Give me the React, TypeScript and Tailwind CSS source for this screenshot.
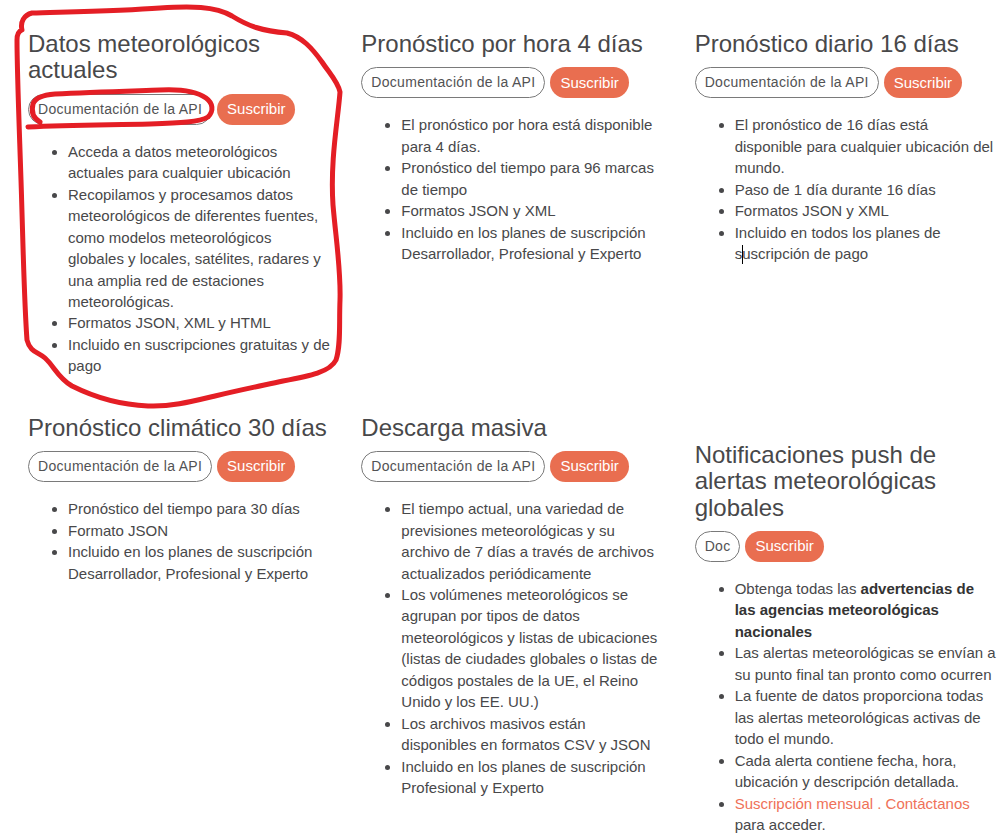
import React from "react";

type Item = React.ReactNode;

function Buttons({ doc = "Documentación de la API" }: { doc?: string }) {
  return (
    <div className="flex gap-[5px] mb-[16px]">
      <span className="h-[31px] flex items-center px-[9px] rounded-full border border-[#7a7a7a] text-[14px] tracking-[0.3px] text-[#525254] whitespace-nowrap">
        {doc}
      </span>
      <span className="h-[31px] flex items-center px-[10px] rounded-full bg-[#e96e50] text-[15px] text-white whitespace-nowrap">
        Suscribir
      </span>
    </div>
  );
}

function Col({
  title,
  items,
  className = "",
  listClass = "",
}: {
  title: React.ReactNode;
  items: Item[];
  className?: string;
  listClass?: string;
}) {
  return (
    <div className={"w-[333.33px] shrink-0 px-[15px] " + className}>
      <h3 className="text-[24px] leading-[26.4px] text-[#48484a] mb-[10px] whitespace-nowrap">{title}</h3>
      <Buttons doc={className.includes("doc-short") ? "Doc" : undefined} />
      <ul className={"list-disc pl-[40px] text-[15px] leading-[21.45px] " + listClass}>
        {items.map((it, i) => (
          <li key={i} className="whitespace-nowrap">
            {it}
          </li>
        ))}
      </ul>
    </div>
  );
}

export default function App() {
  return (
    <div
      className="relative w-full h-[837px] overflow-hidden bg-white text-[#48484a]"
      style={{ fontFamily: '"Liberation Sans", Arial, sans-serif' }}
    >
      <div className="pl-[13px]">
        <div className="flex items-start pt-[31px]">
          <Col
            title={
              <>
                Datos meteorológicos
                <br />
                actuales
              </>
            }
            items={[
              <>
                Acceda a datos meteorológicos
                <br />
                actuales para cualquier ubicación
              </>,
              <>
                Recopilamos y procesamos datos
                <br />
                meteorológicos de diferentes fuentes,
                <br />
                como modelos meteorológicos
                <br />
                globales y locales, satélites, radares y
                <br />
                una amplia red de estaciones
                <br />
                meteorológicas.
              </>,
              <>Formatos JSON, XML y HTML</>,
              <>
                Incluido en suscripciones gratuitas y de
                <br />
                pago
              </>,
            ]}
          />
          <Col
            title="Pronóstico por hora 4 días"
            items={[
              <>
                El pronóstico por hora está disponible
                <br />
                para 4 días.
              </>,
              <>
                Pronóstico del tiempo para 96 marcas
                <br />
                de tiempo
              </>,
              <>Formatos JSON y XML</>,
              <>
                Incluido en los planes de suscripción
                <br />
                Desarrollador, Profesional y Experto
              </>,
            ]}
          />
          <Col
            title="Pronóstico diario 16 días"
            items={[
              <>
                El pronóstico de 16 días está
                <br />
                disponible para cualquier ubicación del
                <br />
                mundo.
              </>,
              <>Paso de 1 día durante 16 días</>,
              <>Formatos JSON y XML</>,
              <>
                Incluido en todos los planes de
                <br />s
                <span className="inline-block w-px h-[19px] bg-black -mx-[0.5px] align-[-5px]" />
                uscripción de pago
              </>,
            ]}
          />
        </div>

        <div className="flex items-start mt-[38px]">
          <Col
            title="Pronóstico climático 30 días"
            items={[
              <>Pronóstico del tiempo para 30 días</>,
              <>Formato JSON</>,
              <>
                Incluido en los planes de suscripción
                <br />
                Desarrollador, Profesional y Experto
              </>,
            ]}
          />
          <Col
            title="Descarga masiva"
            items={[
              <>
                El tiempo actual, una variedad de
                <br />
                previsiones meteorológicas y su
                <br />
                archivo de 7 días a través de archivos
                <br />
                actualizados periódicamente
              </>,
              <>
                Los volúmenes meteorológicos se
                <br />
                agrupan por tipos de datos
                <br />
                meteorológicos y listas de ubicaciones
                <br />
                (listas de ciudades globales o listas de
                <br />
                códigos postales de la UE, el Reino
                <br />
                Unido y los EE. UU.)
              </>,
              <>
                Los archivos masivos están
                <br />
                disponibles en formatos CSV y JSON
              </>,
              <>
                Incluido en los planes de suscripción
                <br />
                Profesional y Experto
              </>,
            ]}
          />
          <Col
            className="mt-[27px] doc-short"
            listClass="mt-[2px]"
            title={
              <>
                Notificaciones push de
                <br />
                alertas meteorológicas
                <br />
                globales
              </>
            }
            items={[
              <>
                Obtenga todas las <b className="font-bold text-[#333]">advertencias de</b>
                <br />
                <b className="font-bold text-[#333]">las agencias meteorológicas</b>
                <br />
                <b className="font-bold text-[#333]">nacionales</b>
              </>,
              <>
                Las alertas meteorológicas se envían a
                <br />
                su punto final tan pronto como ocurren
              </>,
              <>
                La fuente de datos proporciona todas
                <br />
                las alertas meteorológicas activas de
                <br />
                todo el mundo.
              </>,
              <>
                Cada alerta contiene fecha, hora,
                <br />
                ubicación y descripción detallada.
              </>,
              <>
                <span className="text-[#ef7158]">Suscripción mensual . Contáctanos</span>
                <br />
                para acceder.
              </>,
            ]}
          />
        </div>
      </div>

      <svg
        className="absolute top-0 left-0 pointer-events-none"
        width="997"
        height="837"
        viewBox="0 0 997 837"
      >
        <path
          d="M22 30 C 20 22, 24 15, 32 13 C 60 12, 120 11, 160 8 C 190 6, 215 6, 232 16 C 248 26, 262 31, 287 33 C 302 37, 312 48, 322 62 C 330 74, 338 82, 340 92 C 338 120, 330 160, 333 205 C 336 240, 341 270, 340 300 C 339 325, 341 345, 336 360 C 330 372, 310 376, 283 381 C 260 386, 240 390, 215 396 C 190 402, 170 407, 148 406 C 125 405, 100 400, 72 386 C 58 378, 54 366, 45 358 C 38 352, 30 352, 27 340 C 24 300, 23 240, 21 180 C 19 120, 17 70, 17 40 C 17 33, 19 31, 22 30 Z"
          fill="none"
          stroke="#e41e25"
          strokeWidth="5"
          strokeLinejoin="round"
          strokeLinecap="round"
        />
        <path
          d="M28 127 C 70 125, 110 125, 150 124 C 180 123, 200 122, 208 117 C 214 111, 213 103, 206 98 C 196 91, 180 89, 160 90 C 130 91, 90 92, 55 94 C 42 95, 35 98, 33 104 C 31 112, 33 118, 40 122"
          fill="none"
          stroke="#e41e25"
          strokeWidth="5"
          strokeLinejoin="round"
          strokeLinecap="round"
        />
      </svg>
    </div>
  );
}
